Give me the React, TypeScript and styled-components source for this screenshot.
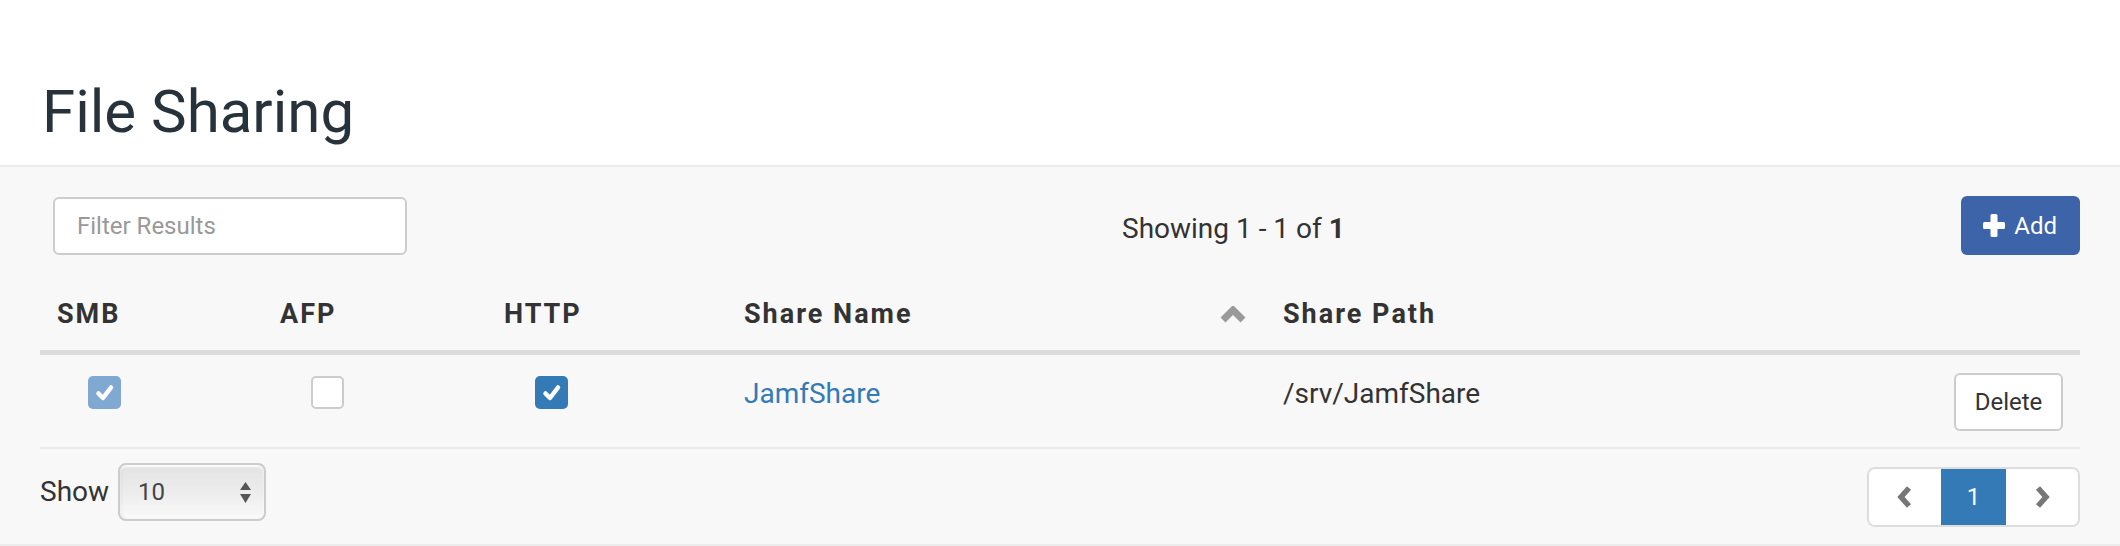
import styled, { createGlobalStyle } from "styled-components"

const GlobalStyle = createGlobalStyle`
  html, body {
    margin: 0;
    padding: 0;
    background: #ffffff;
    font-family: Roboto, "Liberation Sans", sans-serif;
    color: #333333;
  }
`

const COLUMNS = '223px 224px 240px 539px 1fr auto'

const PageHeader = styled.div`
  height: 165px;
  box-sizing: border-box;
  padding: 77px 0 0 42px;
`

const Title = styled.h1`
  margin: 0;
  font-size: 60px;
  line-height: 70px;
  font-weight: 400;
  color: #27323b;
`

const Panel = styled.div`
  background: #f8f8f8;
  border-top: 2px solid #ececec;
  border-bottom: 2px solid #ececec;
  padding: 0 40px;
`

const Toolbar = styled.div`
  display: flex;
  align-items: flex-start;
  padding-top: 29px;
  height: 59px;
`

const FilterInput = styled.input`
  box-sizing: border-box;
  width: 354px;
  height: 58px;
  margin: 1px 0 0 13px;
  padding: 0 22px;
  border: 2px solid #cccccc;
  border-radius: 6px;
  background: #ffffff;
  font-family: Roboto, sans-serif;
  font-size: 24px;
  outline: none;
  &::placeholder {
    color: #999999;
  }
`

const Summary = styled.div`
  margin: 13px 0 0 715px;
  font-size: 28px;
  line-height: 40px;
  color: #333333;
  b {
    font-weight: 700;
  }
`

const AddButton = styled.button`
  margin-left: auto;
  display: flex;
  align-items: center;
  gap: 9px;
  box-sizing: border-box;
  height: 59px;
  padding: 0 23px 0 22px;
  border: none;
  border-radius: 6px;
  background: #3d63a8;
  color: #ffffff;
  font-family: Roboto, sans-serif;
  font-size: 24px;
`

const Table = styled.div`
  margin-top: 23px;
`

const HeadRow = styled.div`
  display: grid;
  grid-template-columns: ${COLUMNS};
  border-bottom: 5px solid #dcdcdc;
`

const HeadCell = styled.div`
  display: flex;
  align-items: center;
  justify-content: space-between;
  padding: 18px 20px 18px 17px;
  font-size: 27px;
  line-height: 36px;
  font-weight: 700;
  letter-spacing: 2px;
  color: #333333;
`

const BodyRow = styled.div`
  display: grid;
  grid-template-columns: ${COLUMNS};
  border-bottom: 2px solid #ececec;
`

const Cell = styled.div<{ $right?: boolean }>`
  display: flex;
  align-items: flex-start;
  justify-content: ${({ $right }) => ($right ? 'flex-end' : 'flex-start')};
  padding: 18px 17px 16px;
  font-size: 28px;
  line-height: 42px;
`

const CheckCell = styled(Cell)`
  padding-left: 48px;
`

const CheckBox = styled.span<{ checked?: boolean; muted?: boolean }>`
  display: flex;
  align-items: center;
  justify-content: center;
  box-sizing: border-box;
  width: 33px;
  height: 33px;
  margin-top: 3px;
  border-radius: 5px;
  ${({ checked, muted }) => checked
    ? `background: ${muted ? '#7fa8d3' : '#337ab7'};`
    : `background: #ffffff; border: 2px solid #cccccc;`}
`

const Link = styled.a`
  color: #337ab7;
  text-decoration: none;
`

const SmallButton = styled.button`
  box-sizing: border-box;
  height: 58px;
  width: 109px;
  border: 2px solid #cccccc;
  border-radius: 6px;
  background: #ffffff;
  color: #333333;
  font-family: Roboto, sans-serif;
  font-size: 24px;
`

const Footer = styled.div`
  display: flex;
  justify-content: space-between;
  align-items: flex-start;
  box-sizing: border-box;
  height: 95px;
  padding-top: 14px;
`

const ShowGroup = styled.div`
  display: flex;
  align-items: center;
  gap: 9px;
  font-size: 28px;
  line-height: 58px;
  color: #333333;
`

const SelectBox = styled.div`
  display: flex;
  align-items: center;
  justify-content: space-between;
  box-sizing: border-box;
  width: 148px;
  height: 58px;
  padding: 0 13px 0 18px;
  border: 2px solid #cccccc;
  border-radius: 8px;
  background: linear-gradient(#e3e3e3, #ededed 55%, #fafafa);
  box-shadow: inset 0 2px 2px rgba(255, 255, 255, 0.9), inset 2px 0 3px rgba(0, 0, 0, 0.04);
  font-size: 24px;
  color: #444444;
`

const Pager = styled.div`
  display: flex;
  margin-top: 4px;
  height: 60px;
  box-sizing: border-box;
  border: 2px solid #dddddd;
  border-radius: 8px;
  background: #ffffff;
  overflow: hidden;
`

const PageItem = styled.div<{ active?: boolean }>`
  display: flex;
  align-items: center;
  justify-content: center;
  width: ${({ active }) => (active ? '65px' : '72px')};
  background: ${({ active }) => (active ? '#337ab7' : '#ffffff')};
  color: ${({ active }) => (active ? '#ffffff' : '#777777')};
  font-size: 24px;
`

const SelectArrows = () => (
  <svg width="11" height="21" viewBox="0 0 11 21">
    <polygon points="5.5,0 11,8 0,8" fill="#555555" />
    <polygon points="0,12 11,12 5.5,21" fill="#555555" />
  </svg>
)

const PlusIcon = () => (
  <svg width="22" height="23" viewBox="0 0 22 23">
    <rect x="7.5" y="0" width="7" height="23" rx="1.5" fill="#ffffff" />
    <rect x="0" y="8" width="22" height="7" rx="1.5" fill="#ffffff" />
  </svg>
)

const CheckMark = () => (
  <svg width="20" height="18" viewBox="0 0 20 18">
    <polyline points="3.5,9.5 8,14 16,3.5" fill="none" stroke="#ffffff" strokeWidth="4.5" strokeLinejoin="round" strokeLinecap="round" />
  </svg>
)

// chunky glyphicon-style chevron
const Chevron = ({ dir, color }: { dir: 'up' | 'left' | 'right'; color: string }) => {
  if (dir === 'up') {
    return (
      <svg width="26" height="17" viewBox="0 0 26 17">
        <polyline points="3,14 13,4 23,14" fill="none" stroke={color} strokeWidth="7" strokeLinejoin="miter" />
      </svg>
    )
  }
  const points = dir === 'left' ? '12,2 4,11 12,20' : '4,2 12,11 4,20'
  return (
    <svg width="16" height="22" viewBox="0 0 16 22">
      <polyline points={points} fill="none" stroke={color} strokeWidth="5.5" strokeLinejoin="miter" />
    </svg>
  )
}

const shares = [
  { smb: true, afp: false, http: true, name: 'JamfShare', path: '/srv/JamfShare' },
]

export default function App() {
  return (
    <>
      <GlobalStyle />
      <PageHeader>
        <Title>File Sharing</Title>
      </PageHeader>
      <Panel>
        <Toolbar>
          <FilterInput placeholder="Filter Results" />
          <Summary>Showing 1 - 1 of <b>1</b></Summary>
          <AddButton>
            <PlusIcon />
            Add
          </AddButton>
        </Toolbar>
        <Table>
          <HeadRow>
            <HeadCell>SMB</HeadCell>
            <HeadCell>AFP</HeadCell>
            <HeadCell>HTTP</HeadCell>
            <HeadCell>
              Share Name
              <Chevron dir="up" color="#9a9a9a" />
            </HeadCell>
            <HeadCell>Share Path</HeadCell>
            <HeadCell />
          </HeadRow>
          {shares.map((share) => (
            <BodyRow key={share.name}>
              <CheckCell>
                <CheckBox checked={share.smb} muted>{share.smb && <CheckMark />}</CheckBox>
              </CheckCell>
              <CheckCell>
                <CheckBox checked={share.afp}>{share.afp && <CheckMark />}</CheckBox>
              </CheckCell>
              <CheckCell>
                <CheckBox checked={share.http}>{share.http && <CheckMark />}</CheckBox>
              </CheckCell>
              <Cell><Link href="#">{share.name}</Link></Cell>
              <Cell>{share.path}</Cell>
              <Cell $right><SmallButton>Delete</SmallButton></Cell>
            </BodyRow>
          ))}
        </Table>
        <Footer>
          <ShowGroup>
            Show
            <SelectBox>
              10
              <SelectArrows />
            </SelectBox>
          </ShowGroup>
          <Pager>
            <PageItem><Chevron dir="left" color="#777777" /></PageItem>
            <PageItem active>1</PageItem>
            <PageItem><Chevron dir="right" color="#777777" /></PageItem>
          </Pager>
        </Footer>
      </Panel>
    </>
  )
}
